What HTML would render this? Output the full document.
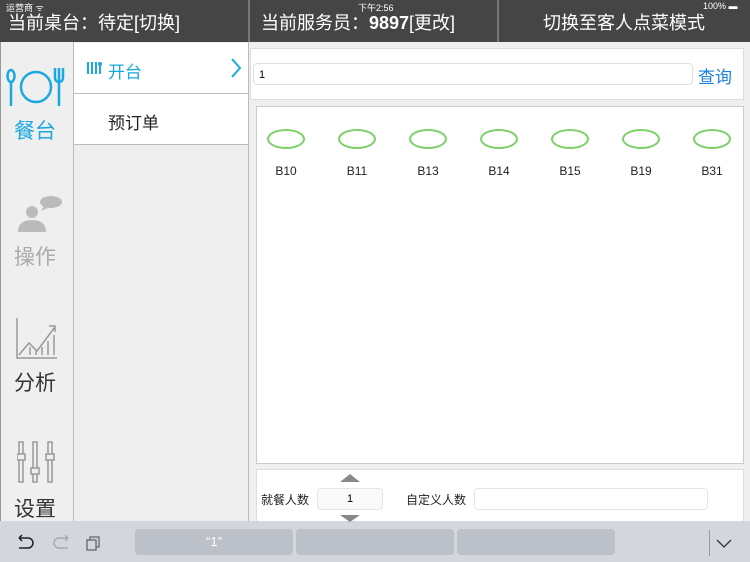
<!DOCTYPE html>
<html><head><meta charset="utf-8"><style>
*{margin:0;padding:0;box-sizing:border-box}
body{width:750px;height:562px;overflow:hidden;background:#efefef;font-family:"Liberation Sans","Noto Sans CJK SC",sans-serif;position:relative}
.a{position:absolute}
.top{left:0;top:0;width:750px;height:42px;background:#454545;color:#fff;font-size:18px}
.top div{position:absolute;top:9px}
.sb{position:absolute;font-size:9px;color:#fff}
.vd{position:absolute;top:0;width:2px;height:42px;background:#777}
.ell{position:absolute;width:38px;height:20px;border:2.5px solid #7dd16a;border-radius:50%}
.lbl{position:absolute;font-size:12px;color:#222;width:40px;text-align:center}
</style></head><body>
<div class="a top">
<div style="left:8px">当前桌台：待定[切换]</div>
<div style="left:261px">当前服务员：<b>9897</b>[更改]</div>
<div style="left:543px">切换至客人点菜模式</div>
<span class="sb" style="left:6px;top:1px">运营商 ᯤ</span>
<span class="sb" style="left:358px;top:1px">下午2:56</span>
<span class="sb" style="left:703px;top:1px">100% ▬</span>
<span class="vd" style="left:248px"></span><span class="vd" style="left:497px"></span>
</div>
<div class="a" style="left:0;top:42px;width:74px;height:480px;background:#efefef;border-left:1px solid #999;border-right:1px solid #bbb"></div>
<svg class="a" style="left:6px;top:66px" width="60" height="42" viewBox="0 0 60 42" fill="none" stroke="#1aa8e0" stroke-width="2.5">
<ellipse cx="5" cy="10" rx="3.5" ry="6"/><line x1="5" y1="16" x2="5" y2="40"/>
<circle cx="30" cy="21" r="15"/>
<path d="M49 2v10a4 4 0 0 0 8 0V2M53 2v38"/></svg>
<div class="a" style="left:14px;top:115px;font-size:21px;color:#1aa8e0">餐台</div>
<svg class="a" style="left:16px;top:194px" width="46" height="40" viewBox="0 0 46 40" fill="#bbb">
<ellipse cx="35" cy="8" rx="11" ry="6"/><path d="M28 12l-3 5 7-3z"/>
<circle cx="16" cy="18" r="6"/><path d="M2 38q0-12 14-12t14 12z"/></svg>
<div class="a" style="left:14px;top:241px;font-size:21px;color:#aaa">操作</div>
<svg class="a" style="left:16px;top:317px" width="42" height="42" viewBox="0 0 42 42" fill="none" stroke="#999" stroke-width="1.5">
<path d="M1 1v40h40M3 38l10-12 8 8 18-24M33 9h6v6M14 38v-8M20 38v-4M26 38v-8M32 38v-14M38 38v-20"/></svg>
<div class="a" style="left:14px;top:367px;font-size:21px;color:#333">分析</div>
<svg class="a" style="left:17px;top:440px" width="38" height="44" viewBox="0 0 38 44" fill="none" stroke="#999" stroke-width="1.5">
<rect x="2" y="2" width="4" height="40"/><rect x="16" y="2" width="4" height="40"/><rect x="31" y="2" width="4" height="40"/>
<rect x="0" y="14" width="8" height="6" fill="#efefef"/><rect x="14" y="28" width="8" height="6" fill="#efefef"/><rect x="29" y="14" width="8" height="6" fill="#efefef"/></svg>
<div class="a" style="left:14px;top:493px;font-size:21px;color:#333">设置</div>
<div class="a" style="left:74px;top:42px;width:175px;height:480px;background:#eee;border-right:1px solid #bbb"></div>
<div class="a" style="left:74px;top:43px;width:174px;height:51px;background:#fff;border-bottom:1px solid #bbb"></div>
<div class="a" style="left:74px;top:94px;width:174px;height:51px;background:#fff;border-bottom:1px solid #bbb"></div>
<svg class="a" style="left:86px;top:61px" width="16" height="14"><path d="M2 1v12M6 1v12M10 1v12M14 3v10" stroke="#1aa8e0" stroke-width="2"/><circle cx="14" cy="3" r="2" fill="#1aa8e0"/></svg>
<div class="a" style="left:108px;top:58px;font-size:17px;color:#1aa8e0">开台</div>
<svg class="a" style="left:230px;top:58px" width="12" height="20" fill="none" stroke="#1aa8e0" stroke-width="2"><path d="M2 1l8 9-8 9"/></svg>
<div class="a" style="left:108px;top:109px;font-size:17px;color:#222">预订单</div>
<div class="a" style="left:250px;top:48px;width:494px;height:52px;background:#fff;border:1px solid #ddd"></div>
<div class="a" style="left:253px;top:63px;width:440px;height:22px;background:#fff;border:1px solid #e0e0e0;border-radius:4px;font-size:11px;padding:5px 5px">1</div>
<div class="a" style="left:698px;top:63px;font-size:17px;color:#1a7fe0">查询</div>
<div class="a" style="left:256px;top:106px;width:488px;height:358px;background:#fff;border:1px solid #ccc"></div>
<div class="ell" style="left:267px;top:129px"></div><div class="lbl" style="left:266px;top:164px">B10</div>
<div class="ell" style="left:338px;top:129px"></div><div class="lbl" style="left:337px;top:164px">B11</div>
<div class="ell" style="left:409px;top:129px"></div><div class="lbl" style="left:408px;top:164px">B13</div>
<div class="ell" style="left:480px;top:129px"></div><div class="lbl" style="left:479px;top:164px">B14</div>
<div class="ell" style="left:551px;top:129px"></div><div class="lbl" style="left:550px;top:164px">B15</div>
<div class="ell" style="left:622px;top:129px"></div><div class="lbl" style="left:621px;top:164px">B19</div>
<div class="ell" style="left:693px;top:129px"></div><div class="lbl" style="left:692px;top:164px">B31</div>
<div class="a" style="left:256px;top:469px;width:488px;height:60px;background:#fff;border:1px solid #ddd"></div>
<div class="a" style="left:261px;top:491px;font-size:12px;color:#222">就餐人数</div>
<div class="a" style="left:317px;top:488px;width:66px;height:22px;border:1px solid #e5e5e5;border-radius:4px;background:#fafafa;font-size:11px;text-align:center;line-height:20px">1</div>
<div class="a" style="left:340px;top:474px;width:0;height:0;border-left:10px solid transparent;border-right:10px solid transparent;border-bottom:8px solid #888"></div>
<div class="a" style="left:406px;top:491px;font-size:12px;color:#222">自定义人数</div>
<div class="a" style="left:474px;top:488px;width:234px;height:22px;border:1px solid #e5e5e5;border-radius:4px;background:#fff"></div>
<div class="a" style="left:0;top:521px;width:750px;height:41px;background:#d3d6dc"></div>
<div class="a" style="left:340px;top:515px;width:0;height:0;border-left:10px solid transparent;border-right:10px solid transparent;border-top:7px solid #888"></div>
<svg class="a" style="left:16px;top:533px" width="20" height="18" fill="none" stroke="#222" stroke-width="1.5"><path d="M3 5h9a5 5 0 0 1 0 10H3M3 5l3-3M3 5l3 3"/></svg>
<svg class="a" style="left:51px;top:533px" width="20" height="18" fill="none" stroke="#aaa" stroke-width="1.5"><path d="M17 5H8a5 5 0 0 0 0 10h9M17 5l-3-3M17 5l-3 3"/></svg>
<svg class="a" style="left:86px;top:536px" width="14" height="16" fill="none" stroke="#666" stroke-width="1.3"><rect x="1" y="4" width="9" height="10"/><path d="M4 4V1h9v10h-3"/></svg>
<div class="a" style="left:135px;top:529px;width:158px;height:26px;background:#bcc1c9;border-radius:4px;color:#fff;font-size:13px;text-align:center;line-height:26px">“1”</div>
<div class="a" style="left:296px;top:529px;width:158px;height:26px;background:#bcc1c9;border-radius:4px"></div>
<div class="a" style="left:457px;top:529px;width:158px;height:26px;background:#bcc1c9;border-radius:4px"></div>
<div class="a" style="left:709px;top:530px;width:1px;height:26px;background:#999"></div>
<svg class="a" style="left:716px;top:538px" width="16" height="10" fill="none" stroke="#333" stroke-width="1.3"><path d="M1 2l7 7 7-7"/></svg>
</body></html>
